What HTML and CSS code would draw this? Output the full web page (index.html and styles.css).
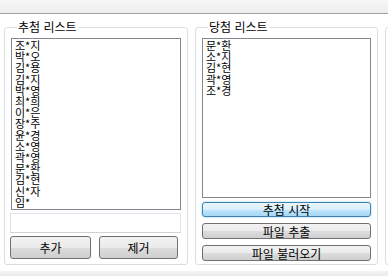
FILE: index.html
```html
<!DOCTYPE html>
<html lang="ko">
<head>
    <meta charset="UTF-8">
    <title>추첨 프로그램</title>
    <link rel="stylesheet" href="styles.css">
</head>
<body>

    <div class="toolbar"></div>

    <div class="main">
        <fieldset class="group group-left">
            <legend>추첨 리스트</legend>
            <div class="listbox list-left">
                <div>조*지</div>
                <div>박*오</div>
                <div>김*용</div>
                <div>김*지</div>
                <div>박*영</div>
                <div>최*희</div>
                <div>이*은</div>
                <div>장*주</div>
                <div>윤*경</div>
                <div>소*영</div>
                <div>곽*영</div>
                <div>문*환</div>
                <div>김*현</div>
                <div>신*자</div>
                <div>임*</div>
            </div>
            <input type="text" class="textbox">
            <div class="btn-row">
                <button class="btn btn-add">추가</button>
                <button class="btn btn-remove">제거</button>
            </div>
        </fieldset>

        <fieldset class="group group-right">
            <legend>당첨 리스트</legend>
            <div class="listbox list-right">
                <div>문*환</div>
                <div>소*지</div>
                <div>김*현</div>
                <div>곽*영</div>
                <div>조*경</div>
            </div>
            <button class="btn btn-wide btn-active">추첨 시작</button>
            <button class="btn btn-wide">파일 추출</button>
            <button class="btn btn-wide">파일 불러오기</button>
        </fieldset>

        <fieldset class="group group-third">
            <legend>&nbsp;</legend>
        </fieldset>
    </div>

    <div class="statusbar"></div>

</body>
</html>
```

FILE: styles.css
```css
/* 기본 스타일 초기화 */
* {
    margin: 0;
    padding: 0;
    box-sizing: border-box;
}

body {
    font-family: "Noto Sans CJK KR", "Noto Sans", sans-serif;
    font-size: 12px;
    color: #000;
    background-color: #fff;
    width: 388px;
    height: 276px;
    overflow: hidden;
}

.toolbar {
    height: 14px;
    background: linear-gradient(#f7f7f7, #eeeeee);
    border-bottom: 1px solid #a0a0a0;
}

.main {
    display: flex;
    gap: 7px;
    height: 257px;
    padding: 6px 0 0 4px;
    overflow: hidden;
}

.group {
    flex: none;
    height: 245px;
    border: 1px solid #d9dee3;
    border-radius: 3px;
    padding: 4px 6px 0 6px;
}

.group legend {
    margin-left: 6px;
    padding: 0 2px 0 1px;
    line-height: 14px;
    font-size: 12px;
}

.group-left {
    width: 183px;
}

.group-right {
    width: 182px;
}

.group-third {
    width: 60px;
}

.listbox {
    border: 1px solid #828790;
    background-color: #fff;
    padding: 1px 3px;
    font-size: 11px;
    line-height: 11.2px;
    overflow: hidden;
}

.list-left {
    height: 172px;
}

.list-right {
    height: 160px;
}

.textbox {
    display: block;
    width: 171px;
    height: 20px;
    margin: 3px 0 0 -1px;
    border: 1px solid #e2e3ea;
    border-bottom-color: #d0d2d8;
    background-color: #fff;
    outline: none;
}

.btn-row {
    display: flex;
    gap: 8px;
    margin: 3px 0 0 -1px;
}

.btn {
    display: block;
    font-family: inherit;
    font-size: 12px;
    color: #000;
    border: 1px solid #707070;
    border-radius: 3px;
    background: linear-gradient(#f2f2f2 0%, #ebebeb 50%, #dddddd 51%, #cfcfcf 100%);
    text-align: center;
    cursor: pointer;
}

.btn-add {
    width: 81px;
    height: 23px;
}

.btn-remove {
    width: 79px;
    height: 23px;
}

.btn-wide {
    width: 169px;
    height: 16px;
    line-height: 13px;
    margin-top: 6px;
}

.btn-active {
    margin-top: 4px;
    height: 15px;
    border-color: #3c7fb1;
    background: linear-gradient(#eaf6fd 0%, #d9f0fc 50%, #bee6fd 51%, #a7d9f5 100%);
    box-shadow: 0 0 2px #7ec6f0;
}

.statusbar {
    height: 5px;
    background: linear-gradient(#f4f4f4, #ebebeb);
}
```
